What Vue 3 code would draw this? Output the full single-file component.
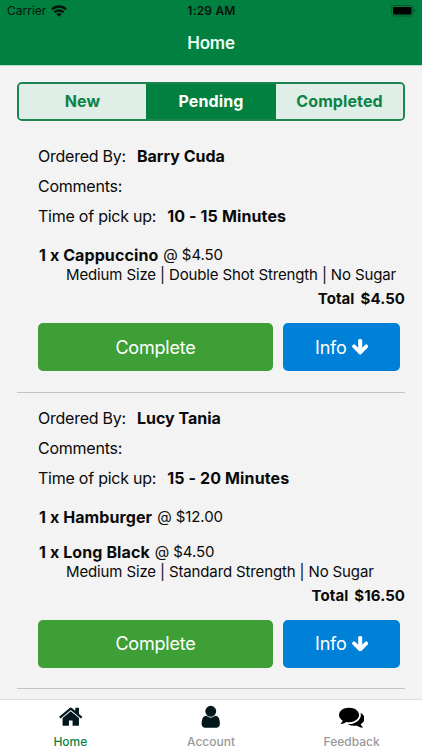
<script setup>
const filters = ['New', 'Pending', 'Completed']
const activeFilter = 'Pending'

const orders = [
  {
    customer: 'Barry Cuda',
    pickup: '10 - 15 Minutes',
    total: '$4.50',
    items: [
      { name: 'Cappuccino', qty: 1, price: '$4.50', options: 'Medium Size | Double Shot Strength | No Sugar' },
    ],
  },
  {
    customer: 'Lucy Tania',
    pickup: '15 - 20 Minutes',
    total: '$16.50',
    items: [
      { name: 'Hamburger', qty: 1, price: '$12.00' },
      { name: 'Long Black', qty: 1, price: '$4.50', options: 'Medium Size | Standard Strength | No Sugar' },
    ],
  },
]

const tabs = [
  {
    label: 'Home',
    color: '#04171c',
    path: 'M1472 992v480q0 26-19 45t-45 19h-384v-384h-256v384h-384q-26 0-45-19t-19-45v-480q0-1 .5-3t.5-3l575-474 575 474q1 2 1 6zm223-69l-62 74q-8 9-21 11h-3q-13 0-21-7l-692-577-692 577q-12 8-24 7-13-2-21-11l-62-74q-8-10-7-23.5t11-21.5l719-599q32-26 76-26t76 26l244 204v-195q0-14 9-23t23-9h192q14 0 23 9t9 23v408l219 182q10 8 11 21.5t-7 23.5z',
  },
  {
    label: 'Account',
    color: '#04171c',
    path: 'M1536 1399q0 109-62.5 187t-150.5 78h-854q-88 0-150.5-78t-62.5-187q0-85 8.5-160.5t31.5-152 58.5-131 94-89 134.5-34.5q131 128 313 128t313-128q76 0 134.5 34.5t94 89 58.5 131 31.5 152 8.5 160.5zm-256-887q0 159-112.5 271.5t-271.5 112.5-271.5-112.5-112.5-271.5 112.5-271.5 271.5-112.5 271.5 112.5 112.5 271.5z',
  },
  {
    label: 'Feedback',
    color: '#000',
    path: 'M1408 768q0 139-94 257t-256.5 186.5-353.5 68.5q-86 0-176-16-124 88-278 128-36 9-86 16h-3q-11 0-20.5-8t-11.5-21q-1-3-1-6.5t.5-6.5 2-6l2.5-5 3.5-5.5 4-5 4.5-5 4-4.5q5-6 23-25t26-29.5 22.5-29 25-38.5 20.5-44q-124-72-195-177t-71-224q0-139 94-257t256.5-186.5 353.5-68.5 353.5 68.5 256.5 186.5 94 257zm384 256q0 120-71 224.5t-195 176.5q10 24 20.5 44t25 38.5 22.5 29 26 29.5 23 25q1 1 4 4.5t4.5 5 4 5 3.5 5.5l2.5 5 2 6 .5 6.5-1 6.5q-3 14-13 22t-22 7q-50-7-86-16-154-40-278-128-90 16-176 16-271 0-472-132 58 4 88 4 161 0 309-45t264-129q125-92 192-212t67-254q0-77-23-152 129 71 204 178t71 230z',
  },
]
</script>

<template>
  <div class="screen">
    <header class="header">
      <div class="status">
        <div class="carrier">
          <span>Carrier</span>
          <svg class="wifi" viewBox="0 0 16 12" fill="none" stroke="#06140c" stroke-width="2.5">
            <path d="M1 4.3a10 10 0 0 1 14 0" />
            <path d="M3.6 7.4a6.2 6.2 0 0 1 8.8 0" />
            <path d="M8 11.8L5.3 9.3a3.8 3.8 0 0 1 5.4 0z" fill="#06140c" stroke="none" />
          </svg>
        </div>
        <span class="clock">1:29 AM</span>
        <div class="power">
          <svg class="battery" viewBox="0 0 25 12">
            <rect x="0.5" y="0.5" width="21.5" height="10.5" rx="2.8" fill="none" stroke="#03572a" />
            <rect x="2" y="2" width="18.5" height="7.5" rx="1.4" fill="#000" />
            <path d="M23.3 4v3.6q1.3-.5 1.3-1.8t-1.3-1.8z" fill="#03572a" />
          </svg>
        </div>
      </div>
      <h1 class="title">Home</h1>
    </header>

    <main class="content">
      <nav class="segments">
        <button v-for="f in filters" :key="f" class="segment" :class="{ active: f === activeFilter }">{{ f }}</button>
      </nav>

      <section v-for="order in orders" :key="order.customer" class="order">
        <div class="row"><span class="label">Ordered By:</span><b class="value">{{ order.customer }}</b></div>
        <div class="row"><span class="label">Comments:</span></div>
        <div class="row"><span class="label">Time of pick up:</span><b class="value pickup">{{ order.pickup }}</b></div>
        <div class="items">
          <div v-for="item in order.items" :key="item.name">
            <div class="item-line">
              <b class="item-name">{{ item.qty }} x {{ item.name }}</b>
              <span class="price">@ {{ item.price }}</span>
            </div>
            <div v-if="item.options" class="options">{{ item.options }}</div>
          </div>
        </div>
        <div class="total"><span>Total</span><span>{{ order.total }}</span></div>
        <div class="actions">
          <button class="btn complete">Complete</button>
          <button class="btn info">
            <span>Info</span>
            <svg class="arrow" viewBox="117 128 1558 1483" fill="#fff">
              <path d="M1675 832q0 53-37 90l-651 652q-39 37-91 37-53 0-90-37l-651-652q-38-36-38-90 0-53 38-91l74-75q39-37 91-37 53 0 90 37l294 294v-704q0-52 38-90t90-38h128q52 0 90 38t38 90v704l294-294q37-37 90-37 52 0 91 37l75 75q37 39 37 91z" />
            </svg>
          </button>
        </div>
      </section>
    </main>

    <footer class="tabbar">
      <div v-for="(tab, i) in tabs" :key="tab.label" class="tab" :class="{ current: i === 0 }">
        <svg class="tab-icon" viewBox="0 0 1792 1792" :fill="tab.color"><path :d="tab.path" /></svg>
        <span>{{ tab.label }}</span>
      </div>
    </footer>
  </div>
</template>

<style>
body {
  margin: 0;
}
</style>

<style scoped>
.screen {
  box-sizing: border-box;
  width: 422px;
  height: 750px;
  display: flex;
  flex-direction: column;
  overflow: hidden;
  background: #f3f3f3;
  color: #0a0a0a;
  font-family: Inter, "Liberation Sans", sans-serif;
}
button {
  font-family: inherit;
  border: 0;
  padding: 0;
  margin: 0;
}
.header {
  flex: none;
  height: 65px;
  background: #02803f;
  border-bottom: 1px solid #b5dcc6;
  box-sizing: content-box;
}
.status {
  display: grid;
  grid-template-columns: 1fr auto 1fr;
  align-items: center;
  height: 21px;
  padding: 0 6px 0 7px;
  color: #06140c;
  font-size: 12px;
}
.carrier {
  display: flex;
  align-items: center;
  gap: 5px;
}
.wifi {
  width: 16px;
  height: 12px;
}
.clock {
  font-weight: 600;
  letter-spacing: 0.2px;
}
.power {
  display: flex;
  justify-content: flex-end;
}
.battery {
  width: 25px;
  height: 12px;
}
.title {
  margin: 0;
  line-height: 44px;
  text-align: center;
  color: #e9fff3;
  font-size: 17px;
  font-weight: 600;
  letter-spacing: -0.2px;
}
.content {
  flex: 1;
  min-height: 0;
  padding: 16px 17px 0;
  overflow: hidden;
}
.segments {
  box-sizing: border-box;
  display: grid;
  grid-template-columns: 127px 130px 1fr;
  height: 39px;
  margin-bottom: 10px;
  border: 2px solid #1d8650;
  border-radius: 5px;
  overflow: hidden;
}
.segment {
  padding-bottom: 1px;
  background: #dfeee6;
  color: #0d8346;
  font-size: 16px;
  font-weight: 700;
  letter-spacing: 0.1px;
}
.segment.active {
  background: #02803f;
  color: #fff;
}
.order {
  padding: 10px 0 20.5px 21px;
  border-bottom: 1px solid #c4c4c4;
}
.row {
  display: flex;
  gap: 11px;
  height: 30px;
  line-height: 30px;
  font-size: 16px;
}
.label {
  letter-spacing: -0.24px;
}
.value {
  font-weight: 700;
}
.pickup {
  letter-spacing: 0.13px;
}
.items {
  display: flex;
  flex-direction: column;
  gap: 15px;
  padding-top: 14px;
}
.item-line {
  display: flex;
  gap: 5px;
  height: 20px;
  line-height: 20px;
  padding-left: 1px;
  white-space: pre;
}
.item-name {
  font-size: 16px;
  font-weight: 700;
  letter-spacing: 0.1px;
}
.price {
  font-size: 15px;
  letter-spacing: -0.1px;
}
.options {
  height: 18px;
  line-height: 19px;
  padding-left: 28px;
  font-size: 15px;
  letter-spacing: -0.135px;
  white-space: nowrap;
}
.total {
  display: flex;
  justify-content: flex-end;
  gap: 6px;
  height: 20px;
  line-height: 20px;
  padding-top: 6px;
  font-size: 15px;
  font-weight: 700;
  letter-spacing: 0.08px;
}
.actions {
  display: flex;
  gap: 10px;
  padding-top: 14px;
}
.btn {
  height: 48px;
  border-radius: 5px;
  color: #fff;
  font-size: 18px;
  letter-spacing: -0.2px;
}
.complete {
  width: 235px;
  background: #3e9f37;
}
.info {
  display: flex;
  align-items: center;
  justify-content: center;
  gap: 5px;
  width: 117px;
  background: #0081d8;
}
.arrow {
  width: 16.4px;
  height: 15.6px;
}
.tabbar {
  flex: none;
  box-sizing: border-box;
  display: grid;
  grid-template-columns: repeat(3, 1fr);
  height: 51px;
  padding-top: 4px;
  border-top: 1px solid #dedede;
  background: #fff;
}
.tab {
  display: flex;
  flex-direction: column;
  align-items: center;
  color: #999;
  font-size: 12px;
  font-weight: 500;
  line-height: 16px;
  gap: 4px;
}
.tab.current {
  color: #0d8346;
}
.tab-icon {
  width: 25.5px;
  height: 25.5px;
}
</style>
